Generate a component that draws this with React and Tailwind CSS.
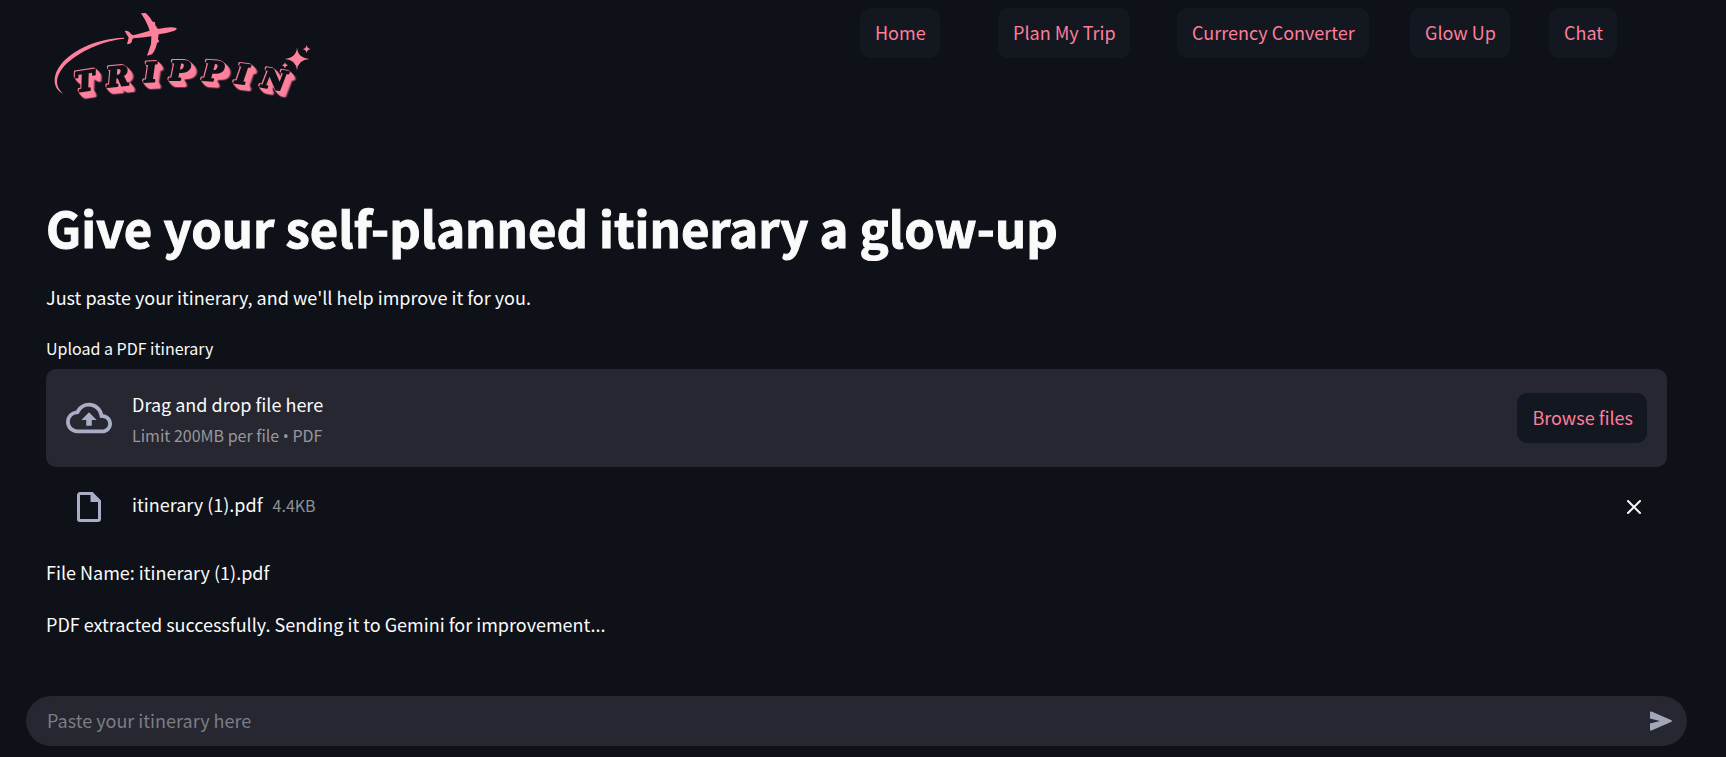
const NAV_ITEMS = ['Home', 'Plan My Trip', 'Currency Converter', 'Glow Up', 'Chat'];

// Logo : avion, traînée, étoiles et nom en relief.
function Logo() {
  return (
    <svg viewBox="18 24 852 306" className="w-[284px] h-[102px] shrink-0" role="img" aria-label="Trippin">
      <g className="[filter:drop-shadow(-3px_-3px_0_#ff809c)_drop-shadow(4px_3px_0_#ff809c)_drop-shadow(3px_4px_0_#ff809c)_drop-shadow(5px_6px_0_#ff809c)_drop-shadow(5px_6px_0_#ff809c)]">
        <text
          x="110 204 314 390 488 584 662"
          y="276 261 246 241 240 248 260"
          rotate="-9 -6 -3 0 4 8 10"
          fontSize="80"
          fill="#0e1117"
          stroke="#0e1117"
          strokeWidth="6"
          strokeLinejoin="round"
          className="font-['DejaVu_Serif',serif] font-bold italic"
        >
          TRIPPIN
        </text>
      </g>
      <g fill="#ff809c">
        <path d="M70 281 C40 268 36 232 58 200 C88 156 160 116 252 113 L252 116 C176 124 100 164 68 204 C46 232 44 260 70 281Z" />
        <path d="M303 40 L317 39 Q333 54 336 64 L345 67 L346 76 L354 87 Q392 79 409 84 Q413 88 401 93 Q380 100 356 103 L354 118 L358 124 L351 130 Q346 152 336 163 L321 167 L333 132 L334 109 Q305 114 280 115 Q275 118 275 127 Q271 133 261 133 L266 113 L254 93 Q264 91 269 97 Q273 105 280 106 Q305 99 329 92 L325 80 Q318 62 303 40Z" />
        <path d="M771 142 Q773 174 808 177 Q774 179 771 211 Q768 179 734 177 Q769 174 771 142Z" />
        <path d="M800 134 Q801 146 813 147 Q801 148 800 160 Q798 148 787 147 Q799 146 800 134Z" />
        <path d="M735 187 Q736 195 744 196 Q736 197 735 205 Q733 197 726 196 Q734 195 735 187Z" />
      </g>
    </svg>
  );
}

function CloudUploadIcon() {
  return (
    <svg viewBox="0 0 24 24" fill="currentColor" className="size-[46px] shrink-0 text-[#a9aec6]" aria-hidden="true">
      <path d="M19.35 10.04A7.49 7.49 0 0012 4C9.11 4 6.6 5.64 5.35 8.04A5.994 5.994 0 000 14c0 3.31 2.69 6 6 6h13c2.76 0 5-2.24 5-5 0-2.64-2.05-4.78-4.65-4.96zM19 18H6c-2.21 0-4-1.79-4-4 0-2.05 1.53-3.76 3.56-3.97l1.07-.11.5-.95A5.469 5.469 0 0112 6c2.62 0 4.88 1.86 5.39 4.43l.3 1.5 1.53.11A2.98 2.98 0 0122 15c0 1.65-1.35 3-3 3zM8 13h2.55v3h2.9v-3H16l-4-4z" />
    </svg>
  );
}

function FileIcon() {
  return (
    <svg viewBox="0 0 24 30" className="w-6 h-[30px] text-[#a9aec6]" aria-hidden="true">
      <path d="M3 1.5h12l7.5 7.5v18a1.5 1.5 0 0 1-1.5 1.5H3A1.5 1.5 0 0 1 1.5 27V3A1.5 1.5 0 0 1 3 1.5Z" fill="none" stroke="currentColor" strokeWidth="3" />
      <path d="M13.500 1.500V10H22.500Z" fill="currentColor" />
    </svg>
  );
}

function PinkButton({ children }) {
  return (
    <button type="button" className="h-[50px] pl-[15px] pr-[14px] pb-0.5 rounded-[10px] bg-[#131720] text-[#ff7d99] text-lg whitespace-nowrap">
      {children}
    </button>
  );
}

export default function App() {
  return (
    <div className="min-h-screen flex flex-col bg-[#0e1117] text-[#fafafa] text-lg leading-8 font-['Noto_Sans_CJK_SC',sans-serif]">
      <header className="pl-[46px] pr-[59px] pt-2">
        <nav className="grid grid-cols-[794fr_118fr_159fr_213fr_119fr_118fr] gap-5 items-start">
          <Logo />
          {NAV_ITEMS.map((item) => (
            <div key={item}>
              <PinkButton>{item}</PinkButton>
            </div>
          ))}
        </nav>
      </header>

      <main className="grow pl-[46px] pr-[59px]">
        <h1 className="mt-[84px] text-[49px] leading-[66px] font-bold [-webkit-text-stroke:1px_#fafafa]">
          Give your self-planned itinerary a glow-up
        </h1>
        <p className="mt-[21px]">Just paste your itinerary, and we'll help improve it for you.</p>

        <label htmlFor="pdf" className="block mt-[23px] text-base leading-6">Upload a PDF itinerary</label>
        <section className="mt-[9px] h-[98px] px-5 flex items-center rounded-[10px] bg-[#262730]">
          <input id="pdf" type="file" accept="application/pdf" className="hidden" />
          <CloudUploadIcon />
          <div className="ml-5 grow">
            <p className="leading-[34px]">Drag and drop file here</p>
            <p className="text-base leading-7 text-[#96979d]">
              Limit 200MB per file <span className="font-['Open_Sans',sans-serif]">•</span> PDF
            </p>
          </div>
          <PinkButton>Browse files</PinkButton>
        </section>

        <div className="mt-4 h-12 px-5 flex items-center">
          <div className="w-[46px] flex justify-center">
            <FileIcon />
          </div>
          <p className="ml-5 pb-1.5 grow">
            itinerary (1).pdf <span className="ml-1.5 text-base text-[#8e8f93]">4.4KB</span>
          </p>
          <button type="button" aria-label="Remove file" className="size-[26px] flex items-center justify-center">
            <svg viewBox="0 0 16 16" className="size-4" fill="none" stroke="currentColor" strokeWidth="2" strokeLinecap="round">
              <path d="M2 2l12 12M14 2L2 14" />
            </svg>
          </button>
        </div>

        <p className="mt-[25px]">File Name: itinerary (1).pdf</p>
        <p className="mt-5">PDF extracted successfully. Sending it to Gemini for improvement...</p>
      </main>

      <form className="ml-[26px] mr-[39px] mb-[11px] h-[50px] pl-[21px] pr-[14px] flex items-center rounded-full bg-[#262730]">
        <input
          type="text"
          aria-label="Paste your itinerary here"
          placeholder="Paste your itinerary here"
          className="grow h-full pb-0.5 bg-transparent outline-none placeholder:text-[#7c7d83]"
        />
        <button type="button" aria-label="Send" className="text-[#a3a8b8]">
          <svg viewBox="0 0 24 20" className="w-6 h-5" fill="currentColor">
            <path d="M1 1.500Q1 0 2.500 .5L22.500 9.200Q23.500 10 22.500 10.800L2.500 19.500Q1 20 1 18.500V12.500L11 10L1 7.500Z" />
          </svg>
        </button>
      </form>
    </div>
  );
}
